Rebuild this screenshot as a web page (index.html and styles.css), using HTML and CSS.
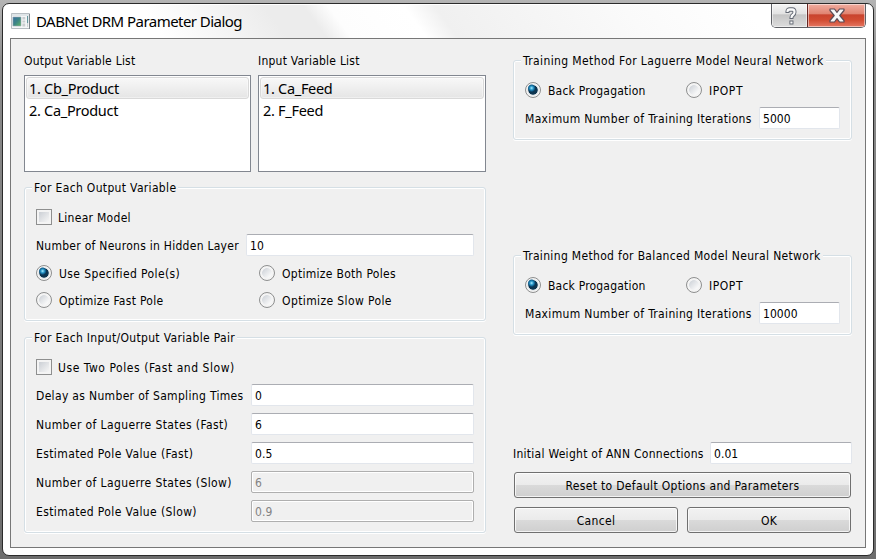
FILE: index.html
```html
<!DOCTYPE html>
<html lang="en">
<head>
<meta charset="utf-8">
<title>DABNet DRM Parameter Dialog</title>
<link rel="stylesheet" href="styles.css">
</head>
<body>
<div class="window">
  <header class="titlebar">
    <svg class="app-icon" width="19" height="17" viewBox="0 0 20 17" preserveAspectRatio="none">
      <defs><linearGradient id="scr" x1="0" y1="0" x2="1" y2="1"><stop offset="0" stop-color="#3a6ea0"/><stop offset=".5" stop-color="#3c8585"/><stop offset="1" stop-color="#62b765"/></linearGradient></defs>
      <path d="M.5.5h19v15H.5z" fill="#f4f6f7" stroke="#b5bbc0"/>
      <path d="M1 1h18v2H1z" fill="#dfe5e8"/>
      <path d="M2 4h8.500v9H2z" fill="url(#scr)" stroke="#9cabb3" stroke-width=".6"/>
      <path d="M12 4h3v2.500h-3zM12 7.500h3v2h-3zM12 10.500h3v3h-3z" fill="#c9cdd0"/>
      <path d="M17.500 3v7" stroke="#4d8790"/><path d="M17.500 10v4" stroke="#c9cdd0"/>
      <path d="M19.500 1v15" stroke="#7d858a"/>
    </svg>
    <h1 class="title">DABNet DRM Parameter Dialog</h1>
    <div class="caption-buttons">
      <div class="cap help">
        <svg width="14" height="20" viewBox="0 0 16 20" preserveAspectRatio="none"><path d="M4 7V5.500Q4 3.500 6.500 3.500H9.500Q12 3.500 12 6Q12 8 10 9.200Q8.500 10 8.500 13M8.500 14.500v4" fill="none" stroke="#626873" stroke-width="4.600"/><path d="M4 6V5.500Q4 3.500 6.500 3.500H9.500Q12 3.500 12 6Q12 8 10 9.200Q8.500 10 8.500 12M8.500 15.500v2" fill="none" stroke="#fafafa" stroke-width="2.500"/></svg>
      </div>
      <div class="cap close">
        <svg width="16" height="15" viewBox="0 0 16 15"><path d="M1 1h4.500L8 4.300 10.500 1H15v1.500L10.800 7.500 15 12.500V14h-4.500L8 10.700 5.500 14H1v-1.500L5.200 7.500 1 2.500z" fill="#f7f7f7" stroke="#5a4b55" stroke-width="1.200" stroke-linejoin="round"/></svg>
      </div>
    </div>
  </header>
  <main class="panel">
    <section class="left">
      <div class="lists">
        <div class="list-col">
          <div class="caption">Output Variable List</div>
          <div class="list"><div class="item selected">1. Cb_Product</div><div class="item">2. Ca_Product</div></div>
        </div>
        <div class="list-col input-col">
          <div class="caption">Input Variable List</div>
          <div class="list"><div class="item selected">1. Ca_Feed</div><div class="item">2. F_Feed</div></div>
        </div>
      </div>
      <div class="group output-group">
        <div class="legend">For Each Output Variable</div>
        <div class="option"><i class="check"></i><span>Linear Model</span></div>
        <div class="row"><span class="label snug">Number of Neurons in Hidden Layer</span><span class="field">10</span></div>
        <div class="radios">
          <div class="option"><i class="radio on"></i><span class="loose">Use Specified Pole(s)</span></div>
          <div class="option"><i class="radio"></i><span>Optimize Both Poles</span></div>
          <div class="option"><i class="radio"></i><span>Optimize Fast Pole</span></div>
          <div class="option"><i class="radio"></i><span class="loose">Optimize Slow Pole</span></div>
        </div>
      </div>
      <div class="group pair-group">
        <div class="legend">For Each Input/Output Variable Pair</div>
        <div class="option"><i class="check"></i><span class="wide">Use Two Poles (Fast and Slow)</span></div>
        <div class="row"><span class="label">Delay as Number of Sampling Times</span><span class="field">0</span></div>
        <div class="row"><span class="label loose">Number of Laguerre States (Fast)</span><span class="field">6</span></div>
        <div class="row"><span class="label loose">Estimated Pole Value (Fast)</span><span class="field">0.5</span></div>
        <div class="row"><span class="label loose">Number of Laguerre States (Slow)</span><span class="field disabled">6</span></div>
        <div class="row"><span class="label loose">Estimated Pole Value (Slow)</span><span class="field disabled">0.9</span></div>
      </div>
    </section>
    <section class="right">
      <div class="group training">
        <div class="legend loose">Training Method For Laguerre Model Neural Network</div>
        <div class="methods"><div class="option"><i class="radio on"></i><span class="tight">Back Progagation</span></div><div class="option"><i class="radio"></i><span class="wide">IPOPT</span></div></div>
        <div class="row"><span class="label">Maximum Number of Training Iterations</span><span class="field">5000</span></div>
      </div>
      <div class="group training">
        <div class="legend">Training Method for Balanced Model Neural Network</div>
        <div class="methods"><div class="option"><i class="radio on"></i><span class="tight">Back Progagation</span></div><div class="option"><i class="radio"></i><span class="wide">IPOPT</span></div></div>
        <div class="row"><span class="label">Maximum Number of Training Iterations</span><span class="field">10000</span></div>
      </div>
      <div class="row weight"><span class="label snug">Initial Weight of ANN Connections</span><span class="field">0.01</span></div>
      <div class="buttons">
        <div class="button reset">Reset to Default Options and Parameters</div>
        <div class="button">Cancel</div>
        <div class="button">OK</div>
      </div>
    </section>
  </main>
</div>
</body>
</html>
```

FILE: styles.css
```css
* { box-sizing: border-box; }
body {
  margin: 0;
  width: 876px;
  height: 559px;
  overflow: hidden;
  padding: 3px 2px 3px;
  background: linear-gradient(#b4b4b4, #8a8a8a 12%, #6d6d6d);
  font: 12px/16px "DejaVu Sans Condensed", "DejaVu Sans", sans-serif;
  font-stretch: condensed;
  letter-spacing: 0.33px;
  color: #000;
}
.window {
  width: 872px;
  height: 553px;
  border: 1px solid #2b2b2b;
  border-radius: 7px;
  padding: 0 7px;
  background: #fff linear-gradient(54deg, #fff 130px, #ececec 230px, #ececec 262px, #fdfdfd 282px, #fff 343px, #f0f0f0 368px, #fafafa 520px, #fff 620px) 0 0 / 100% 34px no-repeat;
  box-shadow: inset 0 1px #fff;
}
.titlebar { height: 34px; display: flex; align-items: flex-start; padding-left: 1px; }
.app-icon { margin-top: 9px; }
.title {
  margin: 6px 0 0 6px;
  font: 15px/22px "Noto Sans", sans-serif;
  font-stretch: normal;
  letter-spacing: -0.54px;
}
.caption-buttons {
  display: flex;
  width: 95px;
  height: 24px;
  margin-left: auto;
  border: 1px solid #5f6166;
  border-top: 0;
  border-radius: 0 0 5px 5px;
  overflow: hidden;
}
.cap { display: flex; align-items: center; justify-content: center; box-shadow: inset 0 0 0 1px rgba(255,255,255,.5); }
.help { width: 35px; background: linear-gradient(#f5f5f5, #e2e2e2 43%, #c5c5c5 47%, #dcdcdc); padding-left: 2px; }
.close { flex: 1; border-left: 1px solid #652622; background: linear-gradient(#f0ada0, #e08370 43%, #c9432d 47%, #d24c32 70%, #e57762); }

.panel {
  height: 510px;
  border: 1px solid #777;
  background: #f0f0f0;
  display: flex;
  justify-content: space-between;
  padding: 13px 13px 0;
}
.left { width: 462px; }
.right { width: 339px; padding-top: 8px; }
.lists { display: flex; justify-content: space-between; }
.list-col { width: 227px; }
.input-col { width: 228px; }
.caption { height: 23px; padding-top: 1px; letter-spacing: 0.23px; }
.list { height: 97px; border: 1px solid #828790; background: #fff; padding: 1px; }
.item {
  height: 22px;
  border: 1px solid transparent;
  padding-left: 2px;
  font: 14.500px/21px "Noto Sans", sans-serif;
  font-stretch: normal;
  letter-spacing: -0.3px;
}
.selected { border-color: #d9d9d9; border-radius: 3px; background: linear-gradient(#f8f8f8, #e5e5e5); box-shadow: inset 0 0 0 1px rgba(255,255,255,.4); }

.group { border: 1px solid #d5dfe5; border-radius: 3px; padding: 0 11px; box-shadow: inset 0 0 0 1px #fff, 0 1px #fff; }
.legend { width: max-content; height: 16px; margin: -9px 0 0 -4px; padding: 1px 2px 0; background: #f0f0f0; }
.output-group { height: 134px; margin-top: 15px; }
.pair-group { height: 196px; margin-top: 16px; }
.option { display: flex; align-items: center; height: 16px; gap: 7px; white-space: nowrap; letter-spacing: 0.29px; }
.option span, .label { padding-top: 2px; }
.legend + .option { margin-top: 14px; gap: 6px; }
.check {
  width: 16px;
  height: 16px;
  border: 1px solid #8e8f8f;
  background: linear-gradient(135deg, #cbcfd5, #f6f6f6) content-box, #f4f4f4;
  padding: 2px;
}
.radio {
  width: 16px;
  height: 16px;
  border: 1px solid #8e8f8f;
  border-radius: 50%;
  background: radial-gradient(circle at 50% 50%, transparent 0 4.500px, #f4f4f4 5.200px), linear-gradient(135deg, #bfc5cd, #fafafa 75%);
}
.radio.on { background: radial-gradient(circle at 40% 36%, #b5ecff 0, #38a7d5 1.500px, #0d5e8e 3px, transparent 4px), radial-gradient(circle, #0c3450 0 4.300px, #d5dce0 5px, #f4f4f4 6px); }
.row { display: flex; align-items: center; height: 22px; }
.label { white-space: nowrap; }
.tight { letter-spacing: 0.2px; }
.snug { letter-spacing: 0.27px; }
.loose { letter-spacing: 0.39px; }
.wide { letter-spacing: 0.55px; }
.field {
  flex: 1;
  height: 22px;
  border: 1px solid #e2e6ec;
  border-top-color: #abadb3;
  border-radius: 2px;
  background: #fff;
  padding: 3px 0 0 3px;
  letter-spacing: 0.05px;
}
.disabled { border-color: #afafaf; background: #f0f0f0; color: #838383; box-shadow: inset 0 0 0 1px #fff; }
.output-group .row { margin-top: 9px; }
.output-group .label { width: 210px; }
.pair-group .label { width: 215px; }
.pair-group .row { margin-top: 7px; }
.pair-group .option + .row { margin-top: 9px; }
.radios { display: grid; grid-template-columns: 223px 1fr; row-gap: 11px; margin-top: 9px; }
.training { height: 80px; margin-bottom: 115px; }
.methods { display: grid; grid-template-columns: 161px 1fr; margin-top: 14px; }
.training .row { margin-top: 9px; }
.training .label { width: 234px; }
.weight { margin-top: -8px; }
.weight .label { width: 197px; }
.buttons { display: grid; grid-template-columns: 1fr 1fr; gap: 9px; padding: 0 1px; margin-top: 8px; }
.button {
  height: 26px;
  border: 1px solid #707070;
  border-radius: 3px;
  background: linear-gradient(#f2f2f2, #ebebeb 48%, #dadada 50%, #cfcfcf);
  box-shadow: inset 0 0 0 1px rgba(255,255,255,.75);
  text-align: center;
  line-height: 26px;
}
.reset { grid-column: span 2; }
```
